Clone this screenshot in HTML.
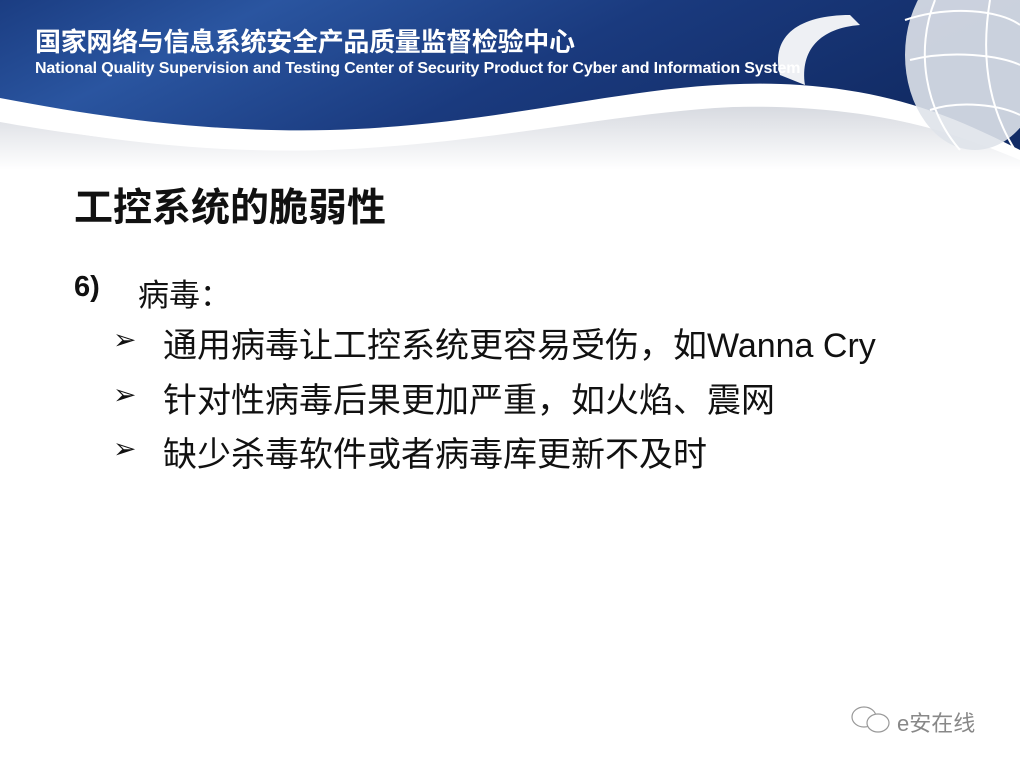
<!DOCTYPE html>
<html><head><meta charset="utf-8"><style>
body{margin:0;width:1020px;height:765px;background:#fff;position:relative;overflow:hidden;font-family:"Liberation Sans","Noto Sans CJK SC",sans-serif}
.t{position:absolute;white-space:nowrap;color:#111}
</style></head><body>
<svg width="1020" height="180" style="position:absolute;left:0;top:0">
<defs>
<linearGradient id="b" x1="0" y1="0" x2="1" y2="0.3">
<stop offset="0" stop-color="#1b3d82"/><stop offset="0.25" stop-color="#2a55a0"/><stop offset="0.6" stop-color="#1a3a7e"/><stop offset="1" stop-color="#122c66"/></linearGradient>
<linearGradient id="s" x1="0" y1="0" x2="0" y2="1"><stop offset="0" stop-color="#a7adbb"/><stop offset="1" stop-color="#fff"/></linearGradient>
</defs>
<path d="M0,0H1020V150C960,120 900,92 800,85C650,75 520,125 330,130C200,133 90,115 0,98Z" fill="url(#b)"/>
<path d="M0,122C100,140 220,152 330,146C520,132 650,100 800,108C900,114 960,135 1020,160V170H0Z" fill="url(#s)" opacity="0.45"/>
<path d="M0,104C90,120 200,138 330,136C520,132 650,88 800,92C900,96 960,125 1020,155V160C960,132 900,110 800,106C650,102 520,142 330,150C200,154 90,138 0,120Z" fill="#fff"/>
<ellipse cx="975" cy="55" rx="70" ry="95" fill="#dfe3ea" opacity="0.9"/>
<path d="M905,20C950,5 1000,10 1020,25M910,60C950,50 1000,55 1020,65M930,110C960,100 1000,105 1020,115M935,0C915,50 925,110 960,150M990,0C980,60 990,110 1015,150" stroke="#fff" stroke-width="2" fill="none"/>
<path d="M780,75C770,35 800,15 850,15L860,25C820,28 800,50 805,85Z" fill="#eef0f4"/>
</svg>
<div class="t" style="left:35px;top:22px;font-size:26px;font-weight:bold;color:#fff;letter-spacing:-0.3px">国家网络与信息系统安全产品质量监督检验中心</div>
<div class="t" style="left:35px;top:60px;font-size:16px;font-weight:bold;color:#fff;letter-spacing:-0.15px">National Quality Supervision and Testing Center of Security Product for Cyber and Information System</div>
<div class="t" style="left:74px;top:177px;font-size:39px;font-weight:bold">工控系统的脆弱性</div>
<div class="t" style="left:74px;top:271px;font-size:29px;font-weight:bold">6)</div>
<div class="t" style="left:138px;top:270px;font-size:31px">病毒：</div>
<div class="t" style="left:113px;top:323px;font-size:28px">➢</div>
<div class="t" style="left:163px;top:318px;font-size:34px">通用病毒让工控系统更容易受伤，如Wanna Cry</div>
<div class="t" style="left:113px;top:378px;font-size:28px">➢</div>
<div class="t" style="left:163px;top:373px;font-size:34px">针对性病毒后果更加严重，如火焰、震网</div>
<div class="t" style="left:113px;top:432px;font-size:28px">➢</div>
<div class="t" style="left:163px;top:427px;font-size:34px">缺少杀毒软件或者病毒库更新不及时</div>
<svg width="44" height="30" style="position:absolute;left:850px;top:705px" fill="none" stroke="#999" stroke-width="1.2"><ellipse cx="14" cy="12" rx="12" ry="10"/><ellipse cx="28" cy="18" rx="11" ry="9" fill="#fff"/></svg>
<div class="t" style="left:897px;top:706px;font-size:22px;color:#888">e安在线</div>
</body></html>
